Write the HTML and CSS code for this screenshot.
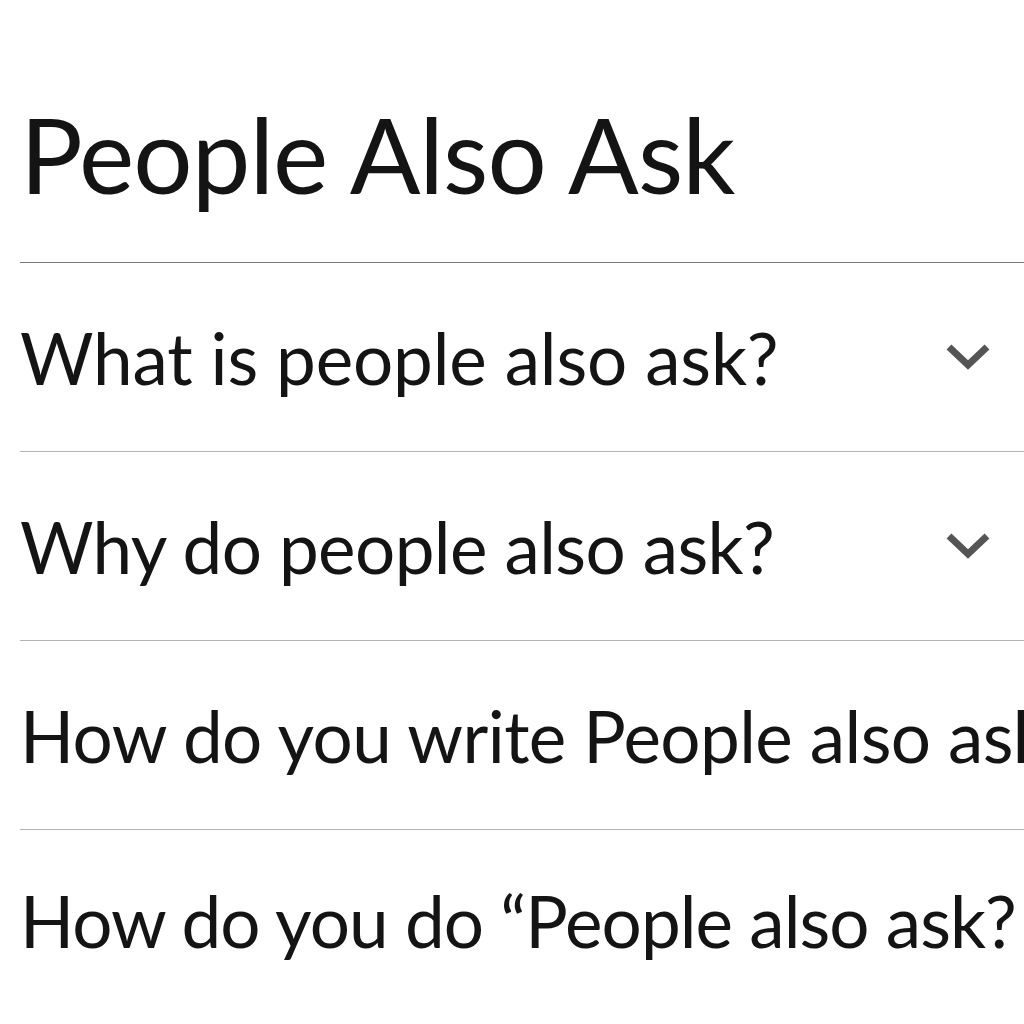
FILE: index.html
```html
<!DOCTYPE html>
<html lang="en">
<head>
<meta charset="utf-8">
<title>People Also Ask</title>
<link rel="stylesheet" href="styles.css">
</head>
<body>
<section class="paa">
  <h1 class="paa-title">People Also Ask</h1>
  <ul class="paa-list">
    <li class="paa-item">
      <span class="paa-q paa-q-wide">What is people also ask?</span>
      <svg class="chev" viewBox="0 0 44 26" width="44" height="26" aria-hidden="true"><polyline points="3,3 22,21 41,3"/></svg>
    </li>
    <li class="paa-item">
      <span class="paa-q">Why do people also ask?</span>
      <svg class="chev" viewBox="0 0 44 26" width="44" height="26" aria-hidden="true"><polyline points="3,3 22,21 41,3"/></svg>
    </li>
    <li class="paa-item">
      <span class="paa-q">How do you write People also ask?</span>
    </li>
    <li class="paa-item paa-item-last">
      <span class="paa-q paa-q-tight">How do you do “People also ask?</span>
    </li>
  </ul>
</section>
</body>
</html>
```
FILE: styles.css
```css
html, body {
  margin: 0;
  padding: 0;
  background: #ffffff;
  overflow: hidden;
}
.paa {
  padding-left: 20px;
  font-family: Lato, "Open Sans", sans-serif;
  color: #141414;
}
.paa-title {
  margin: 0;
  padding: 91px 0 45px 0;
  font-size: 104.7px;
  line-height: 126px;
  font-weight: 400;
  letter-spacing: -1px;
  white-space: nowrap;
  border-bottom: 1px solid #7a7a7a;
}
.paa-list {
  list-style: none;
  margin: 0;
  padding: 0;
}
.paa-item {
  display: flex;
  align-items: center;
  justify-content: space-between;
  height: 188px;
  padding-right: 34px;
  border-bottom: 1px solid #b4b4b4;
}
.paa-item-last {
  height: 180px;
  border-bottom: none;
}
.paa-q {
  font-size: 71px;
  line-height: 85px;
  letter-spacing: -0.6px;
  white-space: nowrap;
}
.paa-q-wide {
  letter-spacing: -0.15px;
}
.paa-q-tight {
  letter-spacing: -0.95px;
}
.chev {
  flex: none;
  fill: none;
  stroke: #555555;
  stroke-width: 7;
  stroke-linejoin: miter;
  stroke-linecap: butt;
}
```
